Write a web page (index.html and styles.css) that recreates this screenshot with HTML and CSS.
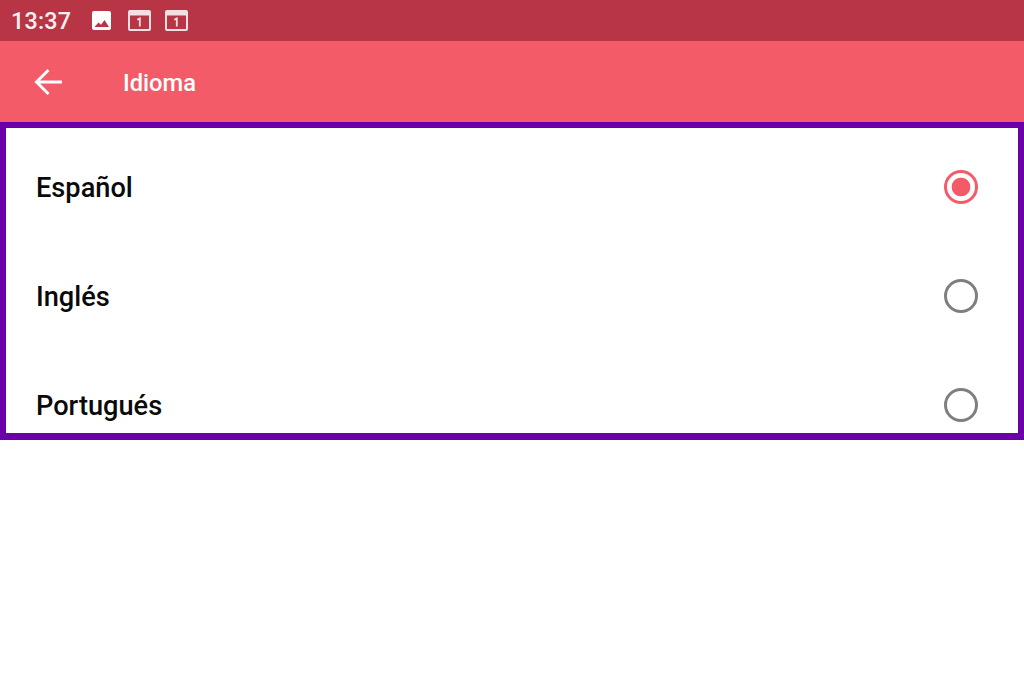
FILE: index.html
```html
<!DOCTYPE html>
<html lang="es">
<head>
<meta charset="utf-8">
<title>Idioma</title>
<link rel="stylesheet" href="styles.css">
</head>
<body>
<div class="status-bar">
  <span class="clock">13:37</span>
  <div class="status-icons">
    <svg class="ic-image" width="19" height="19" viewBox="0 0 19 19"><path fill="#fff" fill-rule="evenodd" d="M2 0h15a2 2 0 0 1 2 2v15a2 2 0 0 1-2 2H2a2 2 0 0 1-2-2V2a2 2 0 0 1 2-2zM2.500 16h14.500l-4.500-7-3.500 4.800-2.500-2.300z"/></svg>
    <svg class="ic-cal" width="23" height="21" viewBox="0 0 23 21"><rect x="1" y="1" width="21" height="19" rx="1" fill="none" stroke="#f4dfe2" stroke-width="2"/><rect x="1" y="1" width="21" height="4.500" fill="#f4dfe2"/><path d="M9.300 9.800 11.800 8.500v8" fill="none" stroke="#f4dfe2" stroke-width="1.800"/></svg>
    <svg class="ic-cal" width="23" height="21" viewBox="0 0 23 21"><rect x="1" y="1" width="21" height="19" rx="1" fill="none" stroke="#f4dfe2" stroke-width="2"/><rect x="1" y="1" width="21" height="4.500" fill="#f4dfe2"/><path d="M9.300 9.800 11.800 8.500v8" fill="none" stroke="#f4dfe2" stroke-width="1.800"/></svg>
  </div>
</div>
<header class="app-bar">
  <svg class="back" width="28" height="28" viewBox="0 0 28 28"><path d="M28 14H3M14.500 2 2.500 14l12 12" fill="none" stroke="#fff" stroke-width="3"/></svg>
  <h1 class="title">Idioma</h1>
</header>
<main class="panel">
  <div class="row"><span class="label">Español</span><span class="radio radio-on"></span></div>
  <div class="row"><span class="label">Inglés</span><span class="radio"></span></div>
  <div class="row"><span class="label">Portugués</span><span class="radio"></span></div>
</main>
</body>
</html>
```
FILE: styles.css
```css
* { box-sizing: border-box; }
html, body { margin: 0; padding: 0; height: 100%; overflow: hidden; background: #fff; }
body { font-family: Roboto, "Noto Sans", sans-serif; }

.status-bar {
  height: 41px;
  background: #b73544;
  display: flex;
  align-items: center;
  padding-left: 11px;
  color: #fbeef0;
}
.clock { font-size: 23.300px; letter-spacing: 0.2px; font-weight: 500; }
.status-icons { display: flex; align-items: center; gap: 14.500px; margin-left: 21px; }
.ic-image { margin-right: 2px; }

.app-bar {
  height: 81px;
  background: #f35b69;
  display: flex;
  align-items: center;
  padding-left: 34px;
}
.back { flex: none; }
.title {
  margin: 3px 0 0 61px;
  font-size: 23.700px;
  font-weight: 500;
  color: #fff;
}

.panel {
  height: 318px;
  border: 6px solid #6a00a8;
  border-bottom-width: 7px;
  padding-top: 4px;
  overflow: hidden;
  background: #fff;
}
.row {
  height: 109px;
  display: flex;
  align-items: center;
  justify-content: space-between;
  padding: 0 40px 0 30px;
}
.label { font-size: 27.200px; font-weight: 500; color: #0a0a0a; padding-top: 2px; }
.radio {
  width: 34px;
  height: 34px;
  border-radius: 50%;
  border: 3.800px solid #7f7f7f;
  display: block;
}
.radio-on {
  border-color: #f35b69;
  background: radial-gradient(circle, #f35b69 0 9px, #fff 9.700px);
}
```
